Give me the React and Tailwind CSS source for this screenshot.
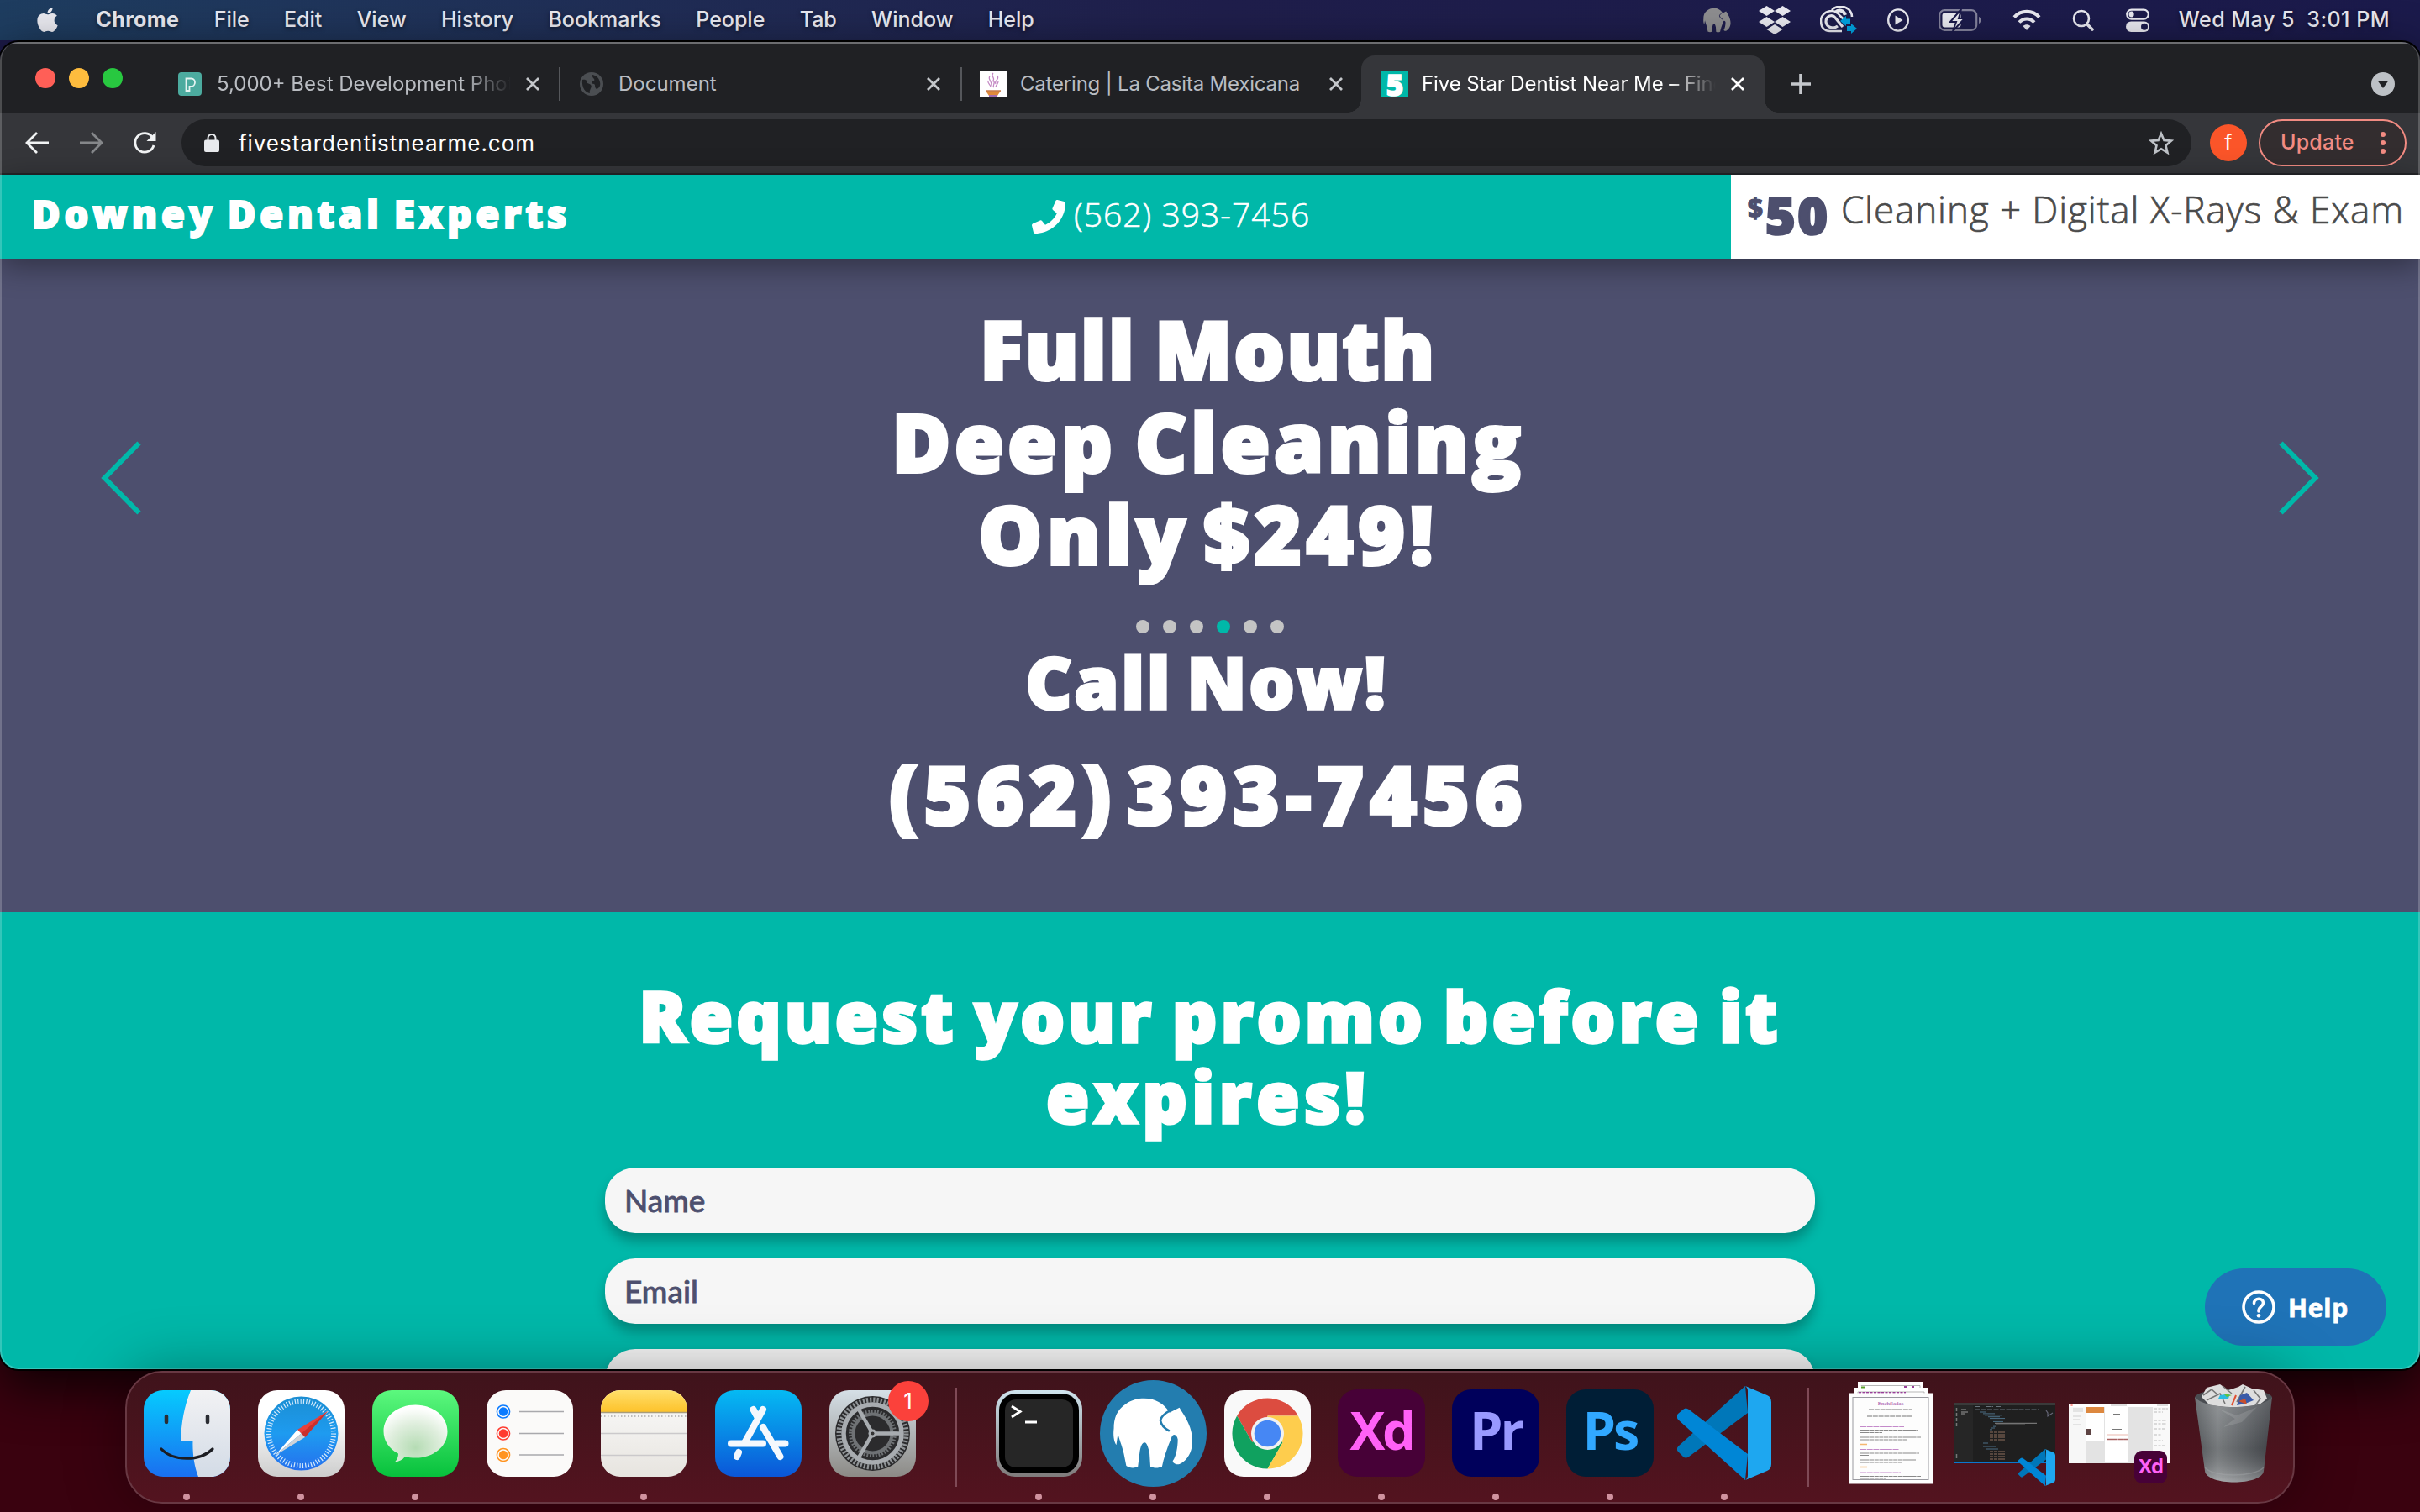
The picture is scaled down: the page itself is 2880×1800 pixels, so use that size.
import React from 'react';
import { FaPhone, FaApple } from 'react-icons/fa';

const menuItems = ['File', 'Edit', 'View', 'History', 'Bookmarks', 'People', 'Tab', 'Window', 'Help'];

const ELEPHANT =
  'M19 58C19 46 22 36 34 28C45 20 63 20 73 26C80 30 84 35 86 39L98 33C101 38 105 44 108 50C112 58 115 70 113 80C111 91 105 98 98 101C94 102 90 100 90 97C94 92 96 80 96 71C95 65 90 63 88 70C83 82 79 94 77 104C73 106 67 106 63 104L62 88C60 78 58 75 56 75C53 75 51 80 50 88L48 104C44 106 38 106 34 103L31 88C28 76 25 70 24 64L22 78C19 74 18 66 19 58Z';

function Elephant({ className, fill, line }) {
  return (
    <svg viewBox="18 20 97 87" className={className}>
      <path d={ELEPHANT} fill={fill} />
      <path d="M87 36C80 40 76 44 75 48C76 54 80 58 86 61" fill="none" stroke={line} strokeWidth="2.6" />
    </svg>
  );
}

function MenuBar() {
  return (
    <header className="flex h-[48px] shrink-0 items-center justify-between bg-linear-to-r from-[#1e3d60] via-[#1f1e4b] via-50% to-[#1b1a4b] pl-[40px] pr-[36px] text-[25px] font-medium text-[#e9e9f0] [text-shadow:0_2px_5px_rgba(0,0,0,0.5)]">
      <div className="flex items-center gap-[41.300px]">
        <FaApple className="size-[33px] -translate-y-[1px]" />
        <span className="tracking-[0.4px] font-bold">Chrome</span>
        {menuItems.map((m) => (
          <span key={m}>{m}</span>
        ))}
      </div>
      <div className="flex items-center">
        <Elephant className="mr-[33px] h-[30px] w-[33px]" fill="#8e8e90" line="#1b1a48" />
        <svg viewBox="0 0 38 34" className="mr-[35px] h-[34px] w-[38px] fill-[#e9e9f0]">
          <path d="M9.500 0L19 6L9.500 12L0 6ZM28.500 0L38 6L28.500 12L19 6ZM9.500 13L19 19L9.500 25L0 19ZM28.500 13L38 19L28.500 25L19 19ZM19 22L28.500 28L19 34L9.500 28Z" />
        </svg>
        <svg viewBox="0 0 44 34" className="mr-[36px] h-[34px] w-[44px]" fill="none" stroke="#e9e9f0">
          <path d="M14 5C18 0 28 -1 34 4C37 7 38 10 38 13M26 30H12C4 30 1 24 1 18C1 11 7 6 14 6C18 6 21 8 24 12L28 16" strokeWidth="2.600" />
          <path d="M21 24C16 28 8 26 7 19C7 11 15 10 18 14L27 25" strokeWidth="3.200" />
          <path d="M18 8C22 4 28 5 30 11" strokeWidth="4" />
          <path d="M24 18L31 12V15.500H36V21H31V24ZM32 24H37V21L44 27L37 33V30H32Z" fill="#00a3e0" stroke="none" />
        </svg>
        <svg viewBox="0 0 26 28" className="mr-[35px] h-[28px] w-[26px]">
          <ellipse cx="13" cy="14" rx="11.800" ry="12.600" fill="none" stroke="#e9e9f0" strokeWidth="2.400" />
          <path d="M9.500 8.500L18.500 14L9.500 19.500Z" fill="#e9e9f0" />
        </svg>
        <svg viewBox="0 0 52 28" className="mr-[36px] h-[28px] w-[52px]">
          <rect x="1.200" y="2.200" width="44" height="23.600" rx="6" fill="none" stroke="#84839c" strokeWidth="2.200" />
          <path d="M48 10V18C51 17 51 11 48 10Z" fill="#84839c" />
          <rect x="4.500" y="5.500" width="22" height="17" rx="3" fill="#e9e9f0" />
          <path d="M27 1L14 16H21L17 27L31 12H24Z" fill="#e9e9f0" stroke="#1b1a4b" strokeWidth="2" />
        </svg>
        <svg viewBox="0 0 34 26" className="mr-[37px] h-[26px] w-[34px]" fill="none" stroke="#e9e9f0" strokeWidth="4">
          <path d="M2 9.500C10 0.500 24 0.500 32 9.500" />
          <path d="M8 15.500C13 10 21 10 26 15.500" />
          <path d="M12.500 20C15 17.500 19 17.500 21.500 20L17 25Z" fill="#e9e9f0" stroke="none" />
        </svg>
        <svg viewBox="0 0 26 28" className="mr-[38px] h-[28px] w-[26px]" fill="none" stroke="#e9e9f0">
          <circle cx="11" cy="12" r="9" strokeWidth="2.600" />
          <path d="M17.500 18.500L24 25" strokeWidth="3.600" strokeLinecap="round" />
        </svg>
        <svg viewBox="0 0 28 28" className="mr-[35px] h-[28px] w-[28px]">
          <rect x="1.200" y="1.600" width="25.600" height="11" rx="5.500" fill="none" stroke="#e9e9f0" strokeWidth="2.200" />
          <rect x="3.600" y="3.600" width="6" height="7" rx="3" fill="#e9e9f0" />
          <rect x="0" y="15.500" width="28" height="12.500" rx="6.200" fill="#e9e9f0" />
          <circle cx="22" cy="21.700" r="4" fill="#1b1a4b" />
        </svg>
        <span className="whitespace-pre tracking-[0.5px]">Wed May 5  3:01 PM</span>
      </div>
    </header>
  );
}

function Close({ active }) {
  return (
    <svg viewBox="0 0 16 16" className="size-[16px] shrink-0">
      <path d="M1 1L15 15M15 1L1 15" stroke={active ? '#ffffff' : '#c4c7cb'} strokeWidth="2.800" />
    </svg>
  );
}

function TabStrip() {
  return (
    <div className="flex h-[82px] items-end bg-[#202124] text-[24px] text-[#b9bcc1]">
      <div className="flex h-[82px] w-[212px] items-center gap-[16px] pl-[42px]">
        <i className="size-[24px] rounded-full bg-[#ff5f57]" />
        <i className="size-[24px] rounded-full bg-[#febc3e]" />
        <i className="size-[24px] rounded-full bg-[#28c840]" />
      </div>
      <div className="flex h-[68px] w-[453px] items-center pr-[23px]">
        <svg viewBox="0 0 28 28" className="mr-[18px] size-[28px] shrink-0">
          <rect width="28" height="28" rx="4" fill="#4cab9f" />
          <path d="M9.500 22V7.500H15.500C22 7.500 21 17 15.500 17H13.500V22Z" fill="none" stroke="#e4f3f1" strokeWidth="1.800" />
        </svg>
        <span className="mr-[18px] flex-1 overflow-hidden whitespace-nowrap [mask-image:linear-gradient(to_right,black_84%,transparent)]">5,000+ Best Development Photos</span>
        <Close />
      </div>
      <div className="flex h-[68px] w-[478px] items-center">
        <i className="h-[40px] w-[2px] bg-[#55575b]" />
        <svg viewBox="0 0 28 28" className="mr-[18px] ml-[23px] size-[28px] shrink-0">
          <circle cx="14" cy="14" r="14" fill="#4b4e52" />
          <path d="M3 9C8 8 9 11 9 13C13 14 15 16 13 19C12 22 11 23 12 25C7 24 2 19 3 9ZM15 3C20 4 23 7 24 12C25 16 23 19 20 20C17 18 19 15 17 14C13 14 14 11 17 10C19 8 14 7 15 3Z" fill="#202124" />
        </svg>
        <span className="flex-1">Document</span>
        <span className="pr-[24px]"><Close /></span>
      </div>
      <div className="flex h-[68px] w-[455px] items-center">
        <i className="mr-[21px] h-[40px] w-[2px] shrink-0 bg-[#55575b]" />
        <svg viewBox="0 0 32 32" className="mr-[16px] size-[32px] shrink-0">
          <rect width="32" height="32" fill="#fff" />
          <path d="M16 3C12 7 20 9 15 13M12 7C9 10 15 13 14 18M21 6C24 11 17 11 19 16M16 12C20 15 14 17 17 20M10 12C9 15 12 16 13 19M22 13C22 16 19 17 19 20" fill="none" stroke="#c489c4" strokeWidth="1.300" />
          <path d="M7 24H25L21 30H11Z" fill="#e08a3a" />
          <path d="M11 30H21" stroke="#a06ab0" strokeWidth="2" />
          <path d="M7 24H25" stroke="#c77a4e" strokeWidth="1.500" />
        </svg>
        <span className="flex-1 whitespace-nowrap tracking-[-0.2px]">Catering | La Casita Mexicana</span>
        <Close />
      </div>
      <div className="ml-[6px] flex h-[68px] items-end">
        <i className="size-[16px] bg-[radial-gradient(circle_at_0_0,#202124_15.500px,#35363a_16px)]" />
        <div className="flex h-full w-[480px] items-center rounded-t-[16px] bg-[#35363a] pl-[24px] pr-[24px] text-white">
          <span className="mr-[16px] flex size-[32px] shrink-0 items-center justify-center bg-[#00b8a9] font-['Open_Sans'] text-[35px] leading-none font-extrabold [-webkit-text-stroke:1.500px_white]">5</span>
          <span className="mr-[18px] flex-1 overflow-hidden whitespace-nowrap tracking-[-0.1px] [mask-image:linear-gradient(to_right,black_84%,transparent)]">Five Star Dentist Near Me – Find</span>
          <Close active />
        </div>
        <i className="size-[16px] bg-[radial-gradient(circle_at_100%_0,#202124_15.500px,#35363a_16px)]" />
      </div>
      <div className="flex h-[68px] flex-1 items-center justify-between pl-[15px] pr-[30px]">
        <svg viewBox="0 0 24 24" className="size-[24px]">
          <path d="M12 0V24M0 12H24" stroke="#c4c7cb" strokeWidth="3.600" />
        </svg>
        <svg viewBox="0 0 28 28" className="size-[28px]">
          <circle cx="14" cy="14" r="14" fill="#bdc1c6" />
          <path d="M7.500 10H20.500L14 19Z" fill="#202124" />
        </svg>
      </div>
    </div>
  );
}

function Toolbar() {
  return (
    <div className="flex h-[74px] items-center border-b-2 border-[#242528] bg-[#35363a] pl-[30px] pr-[16px]">
      <svg viewBox="0 0 28 26" className="h-[26px] w-[28px]" fill="none" stroke="#f1f3f4" strokeWidth="2.800">
        <path d="M28 13H2.500M14 1L2 13L14 25" />
      </svg>
      <svg viewBox="0 0 28 26" className="ml-[37px] h-[26px] w-[28px]" fill="none" stroke="#85878a" strokeWidth="2.800">
        <path d="M0 13H25.500M14 1L26 13L14 25" />
      </svg>
      <svg viewBox="0 0 28 26" className="ml-[35px] h-[28px] w-[28px]" fill="none" stroke="#f1f3f4" strokeWidth="2.800">
        <path d="M23.500 6.500A11.300 11.300 0 1 0 25 16" />
        <path d="M27.500 0V11H16.500Z" fill="#f1f3f4" stroke="none" />
      </svg>
      <div className="ml-[30px] flex h-[56px] w-[2392px] items-center rounded-full bg-[#202124] pl-[27px] pr-[21px] text-[26px] text-white">
        <svg viewBox="0 0 18 22" className="mr-[23px] h-[22px] w-[18px]">
          <rect y="7.500" width="18" height="14.500" rx="2" fill="#e8eaed" />
          <path d="M4.500 8V5.500A4.500 4.500 0 0 1 13.500 5.500V8" fill="none" stroke="#e8eaed" strokeWidth="2" />
        </svg>
        <span className="flex-1 tracking-[0.95px]">fivestardentistnearme.com</span>
        <svg viewBox="0 0 30 28" className="h-[28px] w-[30px]" fill="none" stroke="#bdc1c6" strokeWidth="2.600">
          <path d="M15 3L18.400 10.900L27 11.600L20.500 17.300L22.500 25.700L15 21.200L7.500 25.700L9.500 17.300L3 11.600L11.600 10.900Z" />
        </svg>
      </div>
      <span className="ml-[22px] flex size-[44px] items-center justify-center rounded-full bg-[#fb5529] text-[25px] text-white">f</span>
      <div className="ml-[14px] flex h-[56px] w-[176px] items-center rounded-full border-[2.500px] border-[#f28b82] bg-[#332d2f] pl-[24px] text-[25px] font-medium text-[#f28b82]">
        <span className="w-[119px] tracking-[0.2px]">Update</span>
        <div className="flex flex-col gap-[4px]">
          <i className="size-[6px] rounded-full bg-[#f28b82]" />
          <i className="size-[6px] rounded-full bg-[#f28b82]" />
          <i className="size-[6px] rounded-full bg-[#f28b82]" />
        </div>
      </div>
    </div>
  );
}

function SiteHeader() {
  return (
    <div className="relative z-10 flex h-[100px] shrink-0 items-center bg-[#00b8a9] pl-[38px] font-['Open_Sans'] text-white shadow-[0_8px_36px_rgba(0,0,0,0.4)]">
      <h1 className="w-[1190px] pb-[8px] text-[46px] font-extrabold tracking-[4.500px] [word-spacing:-3px] [-webkit-text-stroke:1.800px_white]">Downey Dental Experts</h1>
      <div className="flex items-center gap-[10px]">
        <FaPhone className="size-[40px]" />
        <span className="pb-[5px] text-[39px] font-light tracking-[1.050px] [-webkit-text-stroke:0.600px_white]">(562) 393-7456</span>
      </div>
      <div className="ml-auto flex h-full w-[820px] bg-white pl-[20px]">
        <span className="mt-[18px] text-[31px] leading-[42px] font-extrabold text-[#4d4f6e] [-webkit-text-stroke:1px_#4d4f6e]">$</span>
        <span className="ml-[3px] mt-[7px] w-[90px] text-[61px] leading-[82px] font-extrabold tracking-[2.500px] text-[#4d4f6e] [-webkit-text-stroke:2.500px_#4d4f6e]">50</span>
        <span className="mt-[14px] whitespace-nowrap text-[44px] leading-[54px] font-light tracking-[0.9px] text-[#4b4b4b] [-webkit-text-stroke:0.700px_#4b4b4b]">Cleaning + Digital X-Rays &amp; Exam</span>
      </div>
    </div>
  );
}

function Chevron({ right }) {
  return (
    <svg viewBox="0 0 50 90" className={right ? 'mt-[164px] h-[90px] w-[50px] -scale-x-100' : 'mt-[164px] h-[90px] w-[50px]'}>
      <path d="M46.500 3.500L5.500 45L46.500 86.500" fill="none" stroke="#00b8a9" strokeWidth="6" />
    </svg>
  );
}

function Hero() {
  return (
    <section className="flex h-[778px] shrink-0 flex-col items-center bg-[#4d4f6e] pt-[52px] text-center font-['Open_Sans'] font-extrabold text-white">
      <div className="flex h-[330px] w-full justify-between px-[119px]">
        <Chevron />
        <h2 className="-ml-[4px] text-[95px] leading-[110px] [-webkit-text-stroke:4px_white]">
          <span className="block tracking-[2.400px] [word-spacing:-5px]">Full Mouth</span>
          <span className="block tracking-[4.700px] [word-spacing:-7px]">Deep Cleaning</span>
          <span className="block tracking-[6px] [word-spacing:-15px]">Only $249!</span>
        </h2>
        <Chevron right />
      </div>
      <div className="mt-[48px] flex gap-[16px]">
        {[0, 1, 2, 3, 4, 5].map((n) => (
          <i key={n} className={n === 3 ? 'size-[16px] rounded-full bg-[#00b8a9]' : 'size-[16px] rounded-full bg-[#c4c4c4]'} />
        ))}
      </div>
      <p className="mt-[9px] -ml-[8px] text-[85px] leading-[96px] tracking-[3px] [word-spacing:-8px] [-webkit-text-stroke:3.500px_white]">Call Now!</p>
      <p className="mt-[31px] -ml-[3px] text-[95px] leading-[110px] tracking-[7.200px] [word-spacing:-20px] [-webkit-text-stroke:4px_white]">(562) 393-7456</p>
    </section>
  );
}

function Promo() {
  return (
    <section className="relative flex h-[544px] shrink-0 flex-col items-center overflow-hidden bg-[#00b8a9] pt-[75px]">
      <h2 className="text-center font-['Open_Sans'] text-[83px] leading-[96px] font-extrabold text-white [-webkit-text-stroke:3.500px_white]">
        <span className="block tracking-[4.200px] [word-spacing:-5px]">Request your promo before it</span>
        <span className="-ml-[5px] block tracking-[5.500px]">expires!</span>
      </h2>
      <form className="mt-[37px] flex w-[1440px] flex-col gap-[30px] font-['Lato'] text-[37px] font-medium text-[#4d4f6e] [-webkit-text-stroke:0.800px_#4d4f6e]">
        {['Name', 'Email', ''].map((f) => (
          <div key={f} className="flex h-[78px] shrink-0 items-center rounded-[36px] bg-[#f6f6f6] pl-[23px] shadow-[0_10px_14px_rgba(0,0,0,0.25)]">{f}</div>
        ))}
      </form>
      <button className="absolute bottom-[28px] right-[40px] flex h-[92px] w-[216px] items-center rounded-full bg-[#1f73b7] pl-[44px] font-['Open_Sans'] text-[30px] font-bold text-white">
        <svg viewBox="0 0 40 40" className="mr-[15px] size-[40px]" fill="none" stroke="#fff">
          <circle cx="20" cy="20" r="18" strokeWidth="3.600" />
          <path d="M14.500 15.500C14.500 8.500 25.500 8.500 25.500 15C25.500 19.500 20 19 20 25" strokeWidth="3.600" strokeLinecap="round" />
          <circle cx="20" cy="30.200" r="2.200" fill="#fff" stroke="none" />
        </svg>
        <span className="tracking-[0.8px] [-webkit-text-stroke:0.800px_white]">Help</span>
      </button>
    </section>
  );
}

function Cell({ dot, children }) {
  return (
    <div className="flex h-full w-[136px] flex-col items-center">
      <div className="flex h-[144px] items-center">{children}</div>
      {dot && <i className="size-[8px] rounded-full bg-[#d0929f]" />}
    </div>
  );
}

function Finder() {
  return (
    <svg viewBox="0 0 103 103" className="size-[103px]">
      <defs>
        <linearGradient id="fa" x2="0" y2="1"><stop stopColor="#06cbfe" /><stop offset="1" stopColor="#1a6ff0" /></linearGradient>
        <linearGradient id="fb" x2="0" y2="1"><stop stopColor="#f2f2f4" /><stop offset="1" stopColor="#d3dbe6" /></linearGradient>
        <clipPath id="fc"><rect width="103" height="103" rx="23" /></clipPath>
      </defs>
      <g clipPath="url(#fc)">
        <rect width="103" height="103" fill="url(#fa)" />
        <path d="M56 0C48 20 45 38 44 60H58.500C58 75 60 90 65 103H103V0Z" fill="url(#fb)" />
      </g>
      <path d="M27 31V38M76 31V38" stroke="#2b2d33" strokeWidth="4.500" strokeLinecap="round" />
      <path d="M21 70C35 85 67 85 82 70" fill="none" stroke="#1c1d22" strokeWidth="3.200" strokeLinecap="round" />
    </svg>
  );
}

function Safari() {
  return (
    <svg viewBox="0 0 103 103" className="size-[103px]">
      <defs>
        <linearGradient id="sa" x2="0" y2="1"><stop offset=".3" stopColor="#fff" /><stop offset="1" stopColor="#cdcdcd" /></linearGradient>
        <linearGradient id="sb" x2="0" y2="1"><stop stopColor="#1b8ed2" /><stop offset=".5" stopColor="#1e9bf0" /><stop offset="1" stopColor="#2570ee" /></linearGradient>
      </defs>
      <rect width="103" height="103" rx="23" fill="url(#sa)" />
      <circle cx="51.500" cy="51.500" r="44" fill="url(#sb)" />
      <circle cx="51.500" cy="51.500" r="38.500" fill="none" stroke="#d4e9fb" strokeWidth="6" strokeDasharray="1.200 2.200" />
      <path d="M83 25L47 47L56 56Z" fill="#e8403b" />
      <path d="M83 25L51.500 51.500L56 56Z" fill="#c9302c" />
      <path d="M20 78L47 47L51.500 51.500Z" fill="#fff" />
      <path d="M20 78L51.500 51.500L56 56Z" fill="#cfd3d8" />
    </svg>
  );
}

function Messages() {
  return (
    <svg viewBox="0 0 103 103" className="size-[103px]">
      <defs>
        <linearGradient id="ma" x2="0" y2="1"><stop stopColor="#5cf87e" /><stop offset="1" stopColor="#07c13c" /></linearGradient>
        <radialGradient id="mb" cx=".5" cy=".75" r=".7"><stop stopColor="#b5dcb4" /><stop offset=".6" stopColor="#dfeedd" /><stop offset="1" stopColor="#ffffff" /></radialGradient>
      </defs>
      <rect width="103" height="103" rx="23" fill="url(#ma)" />
      <path d="M51.500 17.500C73 17.500 89.500 31 89.500 49S73 80.500 51.500 80.500C47 80.500 43 80 39 79C36 83 32 85 27 85.500C30 82 31 79 31 75.500C20 70 13.500 60 13.500 49C13.500 31 30 17.500 51.500 17.500Z" fill="url(#mb)" />
    </svg>
  );
}

function Reminders() {
  return (
    <svg viewBox="0 0 103 103" className="size-[103px]">
      <rect width="103" height="103" rx="23" fill="#fbfaf9" />
      {[['#0a7aff', 25.5], ['#ff3b30', 51.5], ['#ff9320', 77]].map(([c, y]) => (
        <g key={c}>
          <circle cx="20" cy={y} r="7.600" fill="none" stroke={c} strokeWidth="1.500" />
          <circle cx="20" cy={y} r="5.200" fill={c} />
          <path d={`M39 ${y}H92`} stroke="#a9a9ad" strokeWidth="1.600" />
        </g>
      ))}
    </svg>
  );
}

function Notes() {
  return (
    <svg viewBox="0 0 103 103" className="size-[103px]">
      <defs>
        <linearGradient id="na" x2="0" y2="1"><stop stopColor="#ffdf6b" /><stop offset="1" stopColor="#fdc22a" /></linearGradient>
        <linearGradient id="nd" x2="0" y2="1"><stop stopColor="#fbfbfb" /><stop offset="1" stopColor="#e7e4df" /></linearGradient>
        <clipPath id="nb"><rect width="103" height="103" rx="23" /></clipPath>
      </defs>
      <g clipPath="url(#nb)">
        <rect width="103" height="103" fill="url(#nd)" />
        <rect width="103" height="26" fill="url(#na)" />
        <path d="M0 26.500H103" stroke="#a89c7a" strokeWidth="1.400" />
        <path d="M0 31H103" stroke="#aaa" strokeWidth="1.500" strokeDasharray="1.500 2.500" />
        <path d="M0 51.500H103M0 77.500H103" stroke="#cbc9cb" strokeWidth="1.400" />
      </g>
    </svg>
  );
}

function AppStore() {
  return (
    <svg viewBox="0 0 103 103" className="size-[103px]">
      <defs><linearGradient id="aa" x2="0" y2="1"><stop stopColor="#05baf3" /><stop offset="1" stopColor="#0b56d8" /></linearGradient></defs>
      <rect width="103" height="103" rx="23" fill="url(#aa)" />
      <g stroke="#f4f8fd" strokeWidth="8" strokeLinecap="round" fill="none">
        <path d="M45.500 23L51 33M57 23L35.500 62M28 74L26 79M57 44L77.500 79" />
        <path d="M19 63.500H57M73 63.500H83.500" />
      </g>
    </svg>
  );
}

function Settings() {
  return (
    <div className="relative">
      <svg viewBox="0 0 103 103" className="size-[103px]">
        <defs><linearGradient id="ga" x2="0" y2="1"><stop stopColor="#d5dfe6" /><stop offset="1" stopColor="#8c8a86" /></linearGradient></defs>
        <rect width="103" height="103" rx="23" fill="url(#ga)" />
        <circle cx="51.500" cy="51.500" r="44.500" fill="#2b2b2d" />
        <g fill="none" stroke="#a8acb0">
          <circle cx="51.500" cy="51.500" r="40" strokeWidth="6" strokeDasharray="2.200 2" stroke="#8f9396" />
          <circle cx="51.500" cy="51.500" r="34.500" strokeWidth="5.500" />
          <circle cx="51.500" cy="51.500" r="23" strokeWidth="4" stroke="#6f7275" />
          <circle cx="51.500" cy="51.500" r="26.500" strokeWidth="4" strokeDasharray="1.800 1.800" stroke="#6f7275" />
          <path d="M51.500 51.500H85M51.500 51.500L34.500 22M51.500 51.500L34.500 81" strokeWidth="4.500" />
        </g>
        <circle cx="51.500" cy="51.500" r="5" fill="#a8acb0" />
        <circle cx="51.500" cy="51.500" r="2" fill="#333" />
      </svg>
      <span className="absolute left-[70px] -top-[11px] flex size-[48px] items-center justify-center rounded-full bg-[#fb413b] text-[26px] text-white">1</span>
    </div>
  );
}

function Terminal() {
  return (
    <div className="flex size-[103px] rounded-[23px] bg-linear-to-b from-[#cfe4ee] to-[#7f7b7b] p-[4px]">
      <div className="flex flex-1 rounded-[20px] bg-black p-[7px]">
        <div className="flex-1 rounded-[13px] bg-[#262626] pl-[6px] pt-[4px]">
          <svg viewBox="0 0 34 26" className="h-[26px] w-[34px]" fill="none" stroke="#fff" strokeWidth="3">
            <path d="M2 4L12 10.500L2 17M18 23H32" />
          </svg>
        </div>
      </div>
    </div>
  );
}

function Chrome() {
  const sector = 'M0 0L0 -21L36.400 -21A42 42 0 0 0 -36.400 -21L-18.200 10.500Z';
  return (
    <svg viewBox="-51.500 -51.500 103 103" className="size-[103px]">
      <rect x="-51.500" y="-51.500" width="103" height="103" rx="23" fill="#f9f9f9" />
      <path d={sector} fill="#dc4c40" />
      <path d={sector} fill="#10a15f" transform="rotate(-120)" />
      <path d={sector} fill="#fecd4d" transform="rotate(120)" />
      <circle r="19.500" fill="#f1f1f1" />
      <circle r="15.800" fill="#4687f4" />
    </svg>
  );
}

function VsCode({ className }) {
  return (
    <svg viewBox="0 0 112 112" className={className}>
      <path d="M81 0L84 32L14 84Q10 87 7 84L1 78Q-2 75 2 71Z" fill="#0077b9" />
      <path d="M14 28Q10 25 7 28L1 33Q-2 36 1 40L81 112L84 81Z" fill="#0086d6" />
      <path d="M81 0L107 11Q112 13 112 19V93Q112 99 107 101L81 112Q84 110 84 106V6Q84 2 81 0Z" fill="#1ea7f0" />
    </svg>
  );
}

function Documents() {
  return (
    <svg viewBox="0 0 100 122" className="h-[122px] w-[100px]">
      <path d="M11 0H89V12H11ZM7 7H94V18H7Z" fill="#fff" />
      <path d="M15 5V4.500H85V7M11 14V12H90V14" fill="none" stroke="#999" strokeWidth=".7" />
      <path d="M15 6.500H19" stroke="#5aa02c" strokeWidth="2" />
      <path d="M66 6H70M75 6H79M12 12.800H68" stroke="#9a3f9a" strokeWidth="1.800" strokeDasharray="3 1.500" />
      <rect y="13.500" width="100" height="108" fill="#fdfdfd" />
      <rect x="5" y="18.500" width="90" height="98" fill="none" stroke="#9a9aa0" strokeWidth="1" />
      <text x="50" y="28" textAnchor="middle" fontFamily="Liberation Serif" fontSize="7" fill="#a04aa8">Enchiladas</text>
      <path d="M24 33H76M22 41H76" stroke="#777" strokeWidth="1.200" strokeDasharray="6 .8" />
      <path d="M14 53.500H66M14 80.500H60M14 108H62" stroke="#c48aca" strokeWidth="1.200" strokeDasharray="7 .7" />
      <path d="M14 57.500H82M14 60.500H40M14 66H86M14 69H70M14 85H84M14 87.500H24M14 93H80M14 96H64M14 112.500H86M14 115H44" stroke="#8a8a8a" strokeWidth="1.100" strokeDasharray="5 .6" />
      <path d="M14 74.500H22M14 101.500H22" stroke="#f5b870" strokeWidth="1.500" />
    </svg>
  );
}

const codeRows = [[30, 8], [34, 14], [36, 20], [40, 14], [42, 18], [44, 10], [46, 12], [48, 50], [50, 34], [46, 4], [44, 4], [42, 3]];

function CodeWindow() {
  return (
    <div className="relative">
      <svg viewBox="0 0 120 72" className="h-[72px] w-[120px]">
        <rect width="120" height="72" rx="2" fill="#1f1f1f" />
        <rect width="120" height="3" fill="#3a3a3a" />
        <rect y="3" width="22" height="67" fill="#262626" />
        <path d="M24 4.500H32M37 4.500H46M49 4.500H57M24 8H100" stroke="#69737c" strokeWidth="1" strokeDasharray="6 1.500" />
        <path d="M2.500 6V10M2.500 12V16M2.500 18V22M2.500 24V28M2.500 61V66" stroke="#777" strokeWidth="1.500" />
        <path d="M8 8H14M8 11H16M8 13H13" stroke="#999" strokeWidth="1" />
        {codeRows.map(([x, w], i) => (
          <path key={i} d={`M${x} ${11 + i * 1.9}h${w}`} stroke={i === 7 || i === 8 ? '#8a8a8a' : '#4d6f86'} strokeWidth="1" />
        ))}
        <path d="M42 35H60M42 38H60M42 41H60M42 44H60M42 58H60M42 61H60M42 64H60M42 67H60" stroke="#6b564a" strokeWidth="1.600" strokeDasharray="4 1" />
        <path d="M34 48H40M34 52H50M38 55H52" stroke="#4d6f86" strokeWidth="1" />
        <path d="M109 9L111 12V16L117 12" stroke="#667" strokeWidth="1.200" fill="none" />
        <rect y="70" width="120" height="2" fill="#0a78cf" />
      </svg>
      <VsCode className="absolute left-[76px] top-[55px] size-[44px]" />
    </div>
  );
}

function XdWindow() {
  return (
    <div className="relative">
      <svg viewBox="0 0 120 71" className="h-[71px] w-[120px]">
        <rect width="120" height="71" rx="1.500" fill="#e3e3e3" />
        <rect width="120" height="4" fill="#fff" />
        <path d="M1 2H5" stroke="#ff6b5f" strokeWidth="1.500" strokeDasharray="1.500 .6" />
        <path d="M50 2H69M105 2H118" stroke="#bbb" strokeWidth="1" />
        <rect y="4" width="20" height="67" fill="#f7f7f7" />
        <path d="M5 6H17M5 9H17M5 15H15M5 19H13M5 25H15" stroke="#c9c9c9" strokeWidth=".9" />
        <rect x="20" y="4" width="22" height="40" fill="#fff" />
        <rect x="20" y="4" width="22" height="7" fill="#dd883f" />
        <rect x="20" y="30" width="6" height="7" fill="#5d4343" />
        <rect x="43" y="4" width="28" height="65" fill="#fff" />
        <path d="M53 12.500H61M51 30.500H63" stroke="#777" strokeWidth="1.200" />
        <path d="M45 37H71" stroke="#f1cfc9" strokeWidth="1.500" />
        <path d="M45 42.500H71" stroke="#a86060" strokeWidth="1.500" strokeDasharray="6 .7" />
        <rect x="100" y="4" width="20" height="67" fill="#f9f9f9" />
        <path d="M102 6H118M102 10H112M102 20H116M102 24H116M102 30H114M102 37H110M102 44H112M102 50H114" stroke="#bbb" strokeWidth="1" strokeDasharray="3 1.500" />
      </svg>
      <span className="absolute left-[78px] top-[56px] flex size-[39px] items-center justify-center rounded-[9px] bg-[#470137] pb-[2px] font-['Open_Sans'] text-[24px] font-bold tracking-[-1px] text-[#ff61f6]">Xd</span>
    </div>
  );
}

function Trash() {
  return (
    <svg viewBox="0 0 92 118" className="h-[118px] w-[92px]">
      <defs>
        <linearGradient id="ta"><stop stopColor="#5d6165" /><stop offset=".3" stopColor="#85898c" /><stop offset=".6" stopColor="#6b6f73" /><stop offset="1" stopColor="#484b50" /></linearGradient>
        <linearGradient id="tb" x2="0" y2="1"><stop stopColor="#fff" stopOpacity=".12" /><stop offset=".6" stopColor="#000" stopOpacity=".12" /><stop offset="1" stopColor="#fff" stopOpacity=".3" /></linearGradient>
      </defs>
      <ellipse cx="46" cy="17" rx="46" ry="11" fill="#4a4d52" />
      <path d="M8 16L14 5L30 1L40 8L52 4L57 1L68 6L82 8L86 18L76 26L46 29L18 26Z" fill="#dedede" />
      <path d="M10 14L20 7L28 14M14 20L30 12L36 24M70 8L78 18L72 26M60 4L50 22M33 3L44 12" stroke="#777" strokeWidth="1.600" fill="none" />
      <path d="M30 14L42 12L40 18L28 18Z" fill="#2bbbe0" />
      <path d="M34 12L44 14L38 16Z" fill="#62c13c" />
      <path d="M54 14L62 11L70 20L60 24L50 26Z" fill="#3a5aa8" />
      <path d="M52 21L60 18L62 25Z" fill="#c8502e" />
      <path d="M44 26L49 14" stroke="#e05030" strokeWidth="2" />
      <path d="M0 16C10 32 82 32 92 16L82 104C80 122 14 122 12 104Z" fill="url(#ta)" />
      <path d="M0 16C10 32 82 32 92 16L82 104C80 122 14 122 12 104Z" fill="url(#tb)" />
      <path d="M28 30L50 38L74 28L56 46L34 52L48 42Z" fill="#fff" opacity=".12" />
      <path d="M12 100C22 112 70 112 82 100" fill="none" stroke="#a5a8ab" strokeWidth="1.500" opacity=".4" />
    </svg>
  );
}

function Divider() {
  return (
    <div className="flex h-full w-[62px] justify-center pt-[18px] pl-[2px]">
      <i className="h-[118px] w-[2px] bg-[#7f4a56]" />
    </div>
  );
}

function Dock() {
  return (
    <nav className="relative z-20 flex h-[158px] w-[2582px] rounded-[44px] border-2 border-[#683843] bg-linear-to-b from-[#3f131b] to-[#53131f] pl-[3px] shadow-[0_0_70px_rgba(0,0,0,0.35)]">
      <Cell dot><Finder /></Cell>
      <Cell dot><Safari /></Cell>
      <Cell dot><Messages /></Cell>
      <Cell><Reminders /></Cell>
      <Cell dot><Notes /></Cell>
      <Cell><AppStore /></Cell>
      <Cell><Settings /></Cell>
      <Divider />
      <Cell dot><Terminal /></Cell>
      <Cell dot>
        <div className="flex size-[127px] items-center justify-center rounded-full bg-[#237daf]">
          <Elephant className="h-[86px] w-[97px]" fill="#fff" line="#237daf" />
        </div>
      </Cell>
      <Cell dot><Chrome /></Cell>
      <Cell dot>
        <div className="flex size-[104px] items-center justify-center rounded-[23px] bg-[#470137] pb-[7px] font-['Open_Sans'] text-[63px] font-bold tracking-[-3.500px] text-[#ff61f6]">Xd</div>
      </Cell>
      <Cell dot>
        <div className="flex size-[104px] items-center justify-center rounded-[23px] bg-[#00005b] pb-[7px] font-['Open_Sans'] text-[63px] font-bold tracking-[-3px] text-[#9999ff]">Pr</div>
      </Cell>
      <Cell dot>
        <div className="flex size-[104px] items-center justify-center rounded-[23px] bg-[#001e36] pb-[7px] font-['Open_Sans'] text-[63px] font-bold tracking-[-3px] text-[#31a8ff]">Ps</div>
      </Cell>
      <Cell dot><VsCode className="size-[112px]" /></Cell>
      <Divider />
      <Cell><Documents /></Cell>
      <Cell><CodeWindow /></Cell>
      <Cell><XdWindow /></Cell>
      <Cell><Trash /></Cell>
    </nav>
  );
}

export default function App() {
  return (
    <div className="flex h-[1800px] w-[2880px] flex-col overflow-hidden bg-[#1c1a48] font-['Inter',sans-serif]">
      <MenuBar />
      <div className="flex flex-1 flex-col bg-linear-to-b from-[#1c1a48] from-50% to-[#3a020f] to-90%">
        <div className="relative mt-[2px] flex h-[1580px] shrink-0 flex-col overflow-hidden rounded-[22px] shadow-[0_0_0_2px_#000,0_20px_60px_rgba(0,0,0,0.8)]">
          <div className="shrink-0 border-t-2 border-[#6c6d70]">
            <TabStrip />
          </div>
          <div className="shrink-0">
            <Toolbar />
          </div>
          <SiteHeader />
          <Hero />
          <Promo />
          <div className="pointer-events-none absolute inset-0 z-10 rounded-[22px] border-2 border-t-0 border-white/20" />
        </div>
        <div className="mt-[2px] flex pl-[149px]">
          <Dock />
        </div>
      </div>
    </div>
  );
}
